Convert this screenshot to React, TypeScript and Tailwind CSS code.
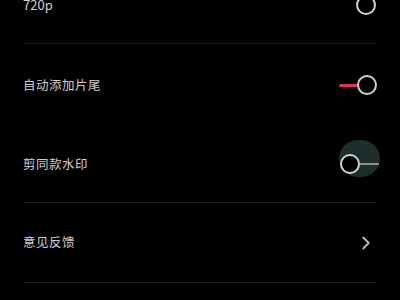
import React from 'react';
import { ChevronRight } from 'lucide-react';

const font = { fontFamily: '"Noto Sans CJK SC", "Noto Sans", sans-serif' };

const Ring = () => (
  <div className="w-[20px] h-[20px] rounded-full border-2 border-[#d2d2d2] bg-black shrink-0" />
);

export default function App() {
  return (
    <div className="w-[400px] h-[300px] bg-black overflow-hidden" style={font}>
      <div className="-mt-[34px] px-[23px]">
        {/* 720p */}
        <div className="h-[77px] flex items-center justify-between">
          <span className="text-[13px] text-[#d0d0d0]">720p</span>
          <div className="mr-[1px]">
            <Ring />
          </div>
        </div>
        <div className="h-px bg-[#1f1f1f]" />

        {/* auto outro */}
        <div className="h-[82px] flex items-center justify-between">
          <span className="text-[12.5px] text-[#d0d0d0] tracking-[0.5px]">自动添加片尾</span>
          <div className="flex items-center">
            <div className="w-[18px] h-[3px] bg-[#e0334d] rounded-l-full" />
            <Ring />
          </div>
        </div>

        {/* watermark */}
        <div className="h-[76px] flex items-center justify-between">
          <span className="text-[12.5px] text-[#d0d0d0] tracking-[0.5px]">剪同款水印</span>
          <div className="relative flex items-center -mr-[2px]">
            <div className="absolute left-[-1px] -top-[14px] w-[41px] h-[37px] rounded-full bg-[#1c2f2c]" />
            <div className="relative">
              <Ring />
            </div>
            <div className="relative w-[19px] h-[2px] bg-[#8a9592]" />
          </div>
        </div>
        <div className="h-px bg-[#1f1f1f]" />

        {/* feedback */}
        <div className="h-[79px] flex items-center justify-between">
          <span className="text-[12.5px] text-[#d0d0d0] tracking-[0.5px]">意见反馈</span>
          <ChevronRight className="w-[22px] h-[22px] text-[#bdbdbd]" strokeWidth={2} />
        </div>
        <div className="h-px bg-[#1f1f1f]" />
      </div>
    </div>
  );
}
